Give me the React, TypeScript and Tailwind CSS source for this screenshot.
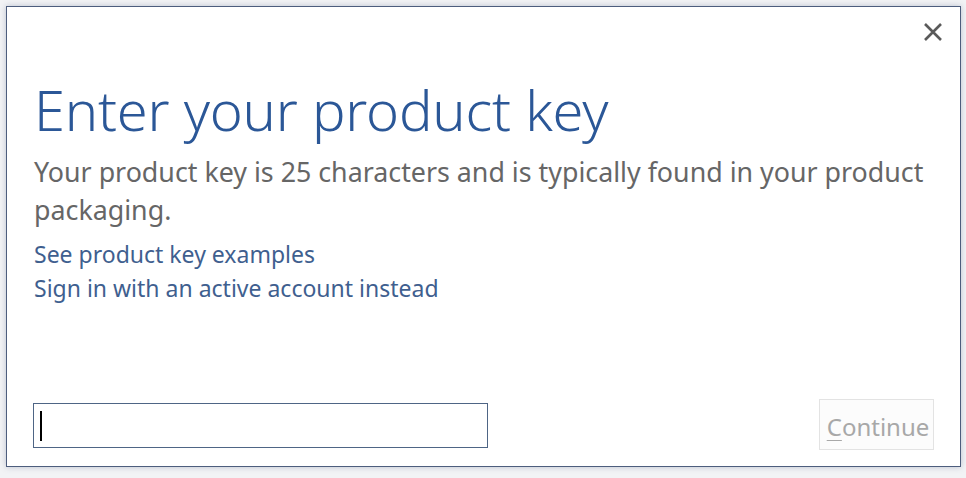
import React from "react";

export default function App() {
  return (
    <div className="w-[966px] h-[478px] bg-[#f2f3f5] pt-[6px] pl-[6px]" style={{ fontFamily: '"Noto Sans", "Open Sans", sans-serif' }}>
      <div className="relative w-[955px] h-[461px] bg-white border border-[#4d5d7d] shadow-[0_0_6px_rgba(120,130,160,0.45)] flex flex-col pl-[27px] pr-[26px]">
        <button className="absolute right-[17px] top-[15px] w-[20px] h-[20px] flex items-center justify-center">
          <svg width="20" height="20" viewBox="0 0 20 20">
            <path d="M2 2 L18 18 M18 2 L2 18" stroke="#5a5a5a" strokeWidth="2.6" fill="none" />
          </svg>
        </button>
        <h1 className="mt-[66px] text-[56px] leading-[72px] font-light text-[#2b5797] tracking-[-0.2px]">Enter your product key</h1>
        <p className="mt-[8px] text-[26.8px] leading-[38px] text-[#666666]">Your product key is 25 characters and is typically found in your product packaging.</p>
        <div className="mt-[8px] flex flex-col text-[23px] leading-[34px] text-[#3f5f8f]">
          <a className="self-start">See product key examples</a>
          <a className="self-start">Sign in with an active account instead</a>
        </div>
        <div className="mt-auto mb-[16px] flex items-end justify-between">
          <div className="w-[455px] h-[45px] border border-[#4e6585] flex items-center pl-[6px] mb-[2px] -ml-[1px]">
            <div className="w-[2px] h-[30px] bg-black" />
          </div>
          <button className="w-[115px] h-[51px] border border-[#e3e3e3] bg-[#fcfcfc] text-[24px] text-[#a8a8a8] flex items-center justify-center pl-[3px] pt-[4px]">
            <span><span className="underline underline-offset-[4px] decoration-1">C</span>ontinue</span>
          </button>
        </div>
      </div>
    </div>
  );
}
